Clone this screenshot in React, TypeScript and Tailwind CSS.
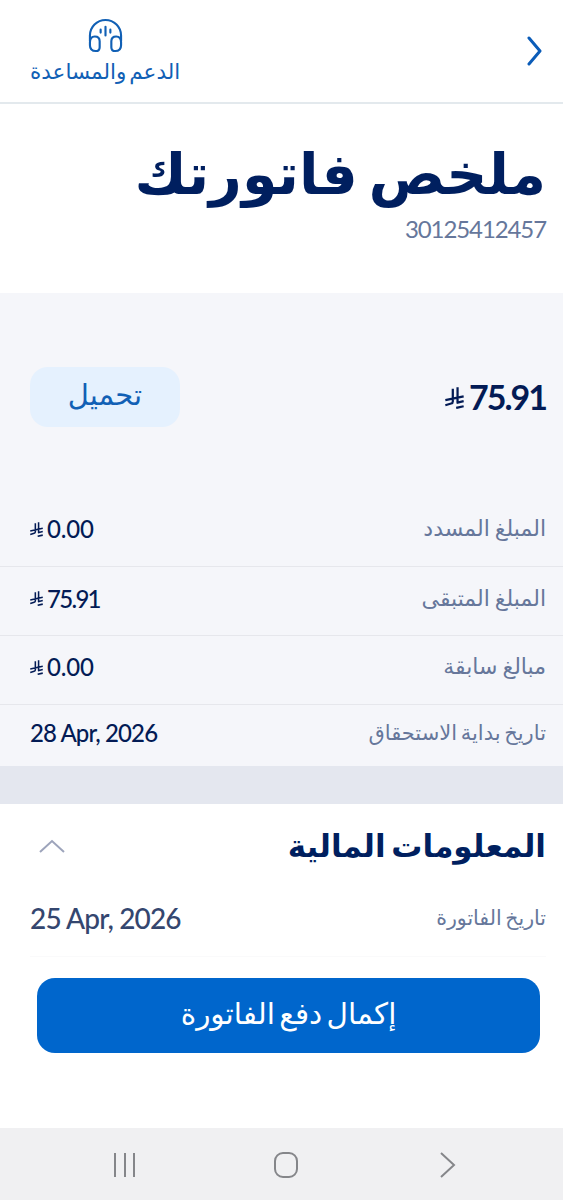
import type { ReactNode } from 'react';

function Riyal({ className }: { className: string }) {
  return (
    <svg viewBox="0 0 56 64" className={className} fill="none" stroke="currentColor" strokeWidth="6.6" preserveAspectRatio="none">
      <path d="M23 5V42Q23 47 18 48L1 53M37 1V46M1 38L55 27M34 46L55 41M33 61L55 56" />
    </svg>
  );
}

type RowProps = { label: string; value: ReactNode; className: string; labelClass?: string; valueClass?: string };

function Row({
  label,
  value,
  className,
  labelClass = 'text-[22px] [word-spacing:-2px]',
  valueClass = 'text-[24px] tracking-[-0.9px] text-[#031b55]',
}: RowProps) {
  return (
    <div className={`flex items-center justify-between pr-[17px] pl-[30px] ${className}`}>
      <span className={`leading-none text-[#66779b] ${labelClass}`}>{label}</span>
      <span dir="ltr" className={`flex items-center gap-1 font-[Lato,sans-serif] leading-none font-medium ${valueClass}`}>
        {value}
      </span>
    </div>
  );
}

function Amount({ children, className }: { children: string; className: string }) {
  return (
    <>
      <Riyal className="h-[15px] w-[13px]" />
      <span className={className}>{children}</span>
    </>
  );
}

export default function App() {
  return (
    <div dir="rtl" className="flex h-[1200px] w-[563px] flex-col overflow-hidden bg-white font-['DejaVu_Sans',sans-serif]">
      <header className="flex h-[104px] shrink-0 items-center justify-between border-b-2 border-[#e3e9ed] pr-[20px] pl-[30px]">
        <svg viewBox="0 0 16 30" className="h-[30px] w-[16px]" fill="none" stroke="#0b5cb8" strokeWidth="3" strokeLinecap="round" strokeLinejoin="round">
          <path d="M2 2L13 15L2 28" />
        </svg>
        <div className="flex flex-col items-center gap-[9px] pb-0.5 text-[#1160b5]">
          <svg viewBox="0 0 36 36" className="h-[35px] w-[35px]" fill="none" stroke="currentColor" strokeWidth="2.2" strokeLinecap="round">
            <path d="M2 24V18a16 16 0 0 1 32 0V24" />
            <path d="M2 25Q2 19 7 19Q12 19 12 24V30Q12 34 8 34Q2 34 2 28ZM34 25Q34 19 29 19Q24 19 24 24V30Q24 34 28 34Q34 34 34 28Z" />
            <path d="M13 12v3M18 9v9M23 12v3" />
          </svg>
          <span className="text-[21.5px] leading-[20px] [word-spacing:-4px]">الدعم والمساعدة</span>
        </div>
      </header>

      <section className="flex h-[189px] shrink-0 flex-col items-start pt-[34px] pr-[17px]">
        <h1 className="text-[57px] leading-[72px] font-bold text-[#001f5f] [word-spacing:-9px]">ملخص فاتورتك</h1>
        <p className="mt-[5px] font-[Lato,sans-serif] text-[24px] leading-[28px] tracking-[-1.1px] text-[#66779b]">30125412457</p>
      </section>

      <section className="shrink-0 bg-[#f5f6fa]">
        <div className="flex h-[205px] items-center justify-between pt-[3px] pr-[17px] pl-[30px]">
          <span dir="ltr" className="flex items-center gap-[5px] font-[Lato,sans-serif] text-[34px] leading-none font-bold text-[#031b55]">
            <Riyal className="mt-0.5 h-[22px] w-[19px]" />
            <span className="tracking-[-2px]">75.91</span>
          </span>
          <button className="flex h-[60px] w-[150px] items-center justify-center rounded-[18px] bg-[#e5f1fe] pb-1 text-[29px] leading-none text-[#1160b5]">تحميل</button>
        </div>
        <Row className="h-[69px] border-b border-[#e6e7ec] pb-[6px]" label="المبلغ المسدد" value={<Amount className="tracking-[-0.2px]">0.00</Amount>} />
        <Row className="h-[69px] border-b border-[#e6e7ec] pb-[5px]" label="المبلغ المتبقى" value={<Amount className="tracking-[-1.7px]">75.91</Amount>} />
        <Row className="h-[69px] border-b border-[#e6e7ec] pb-[6px]" label="مبالغ سابقة" value={<Amount className="tracking-[-0.2px]">0.00</Amount>} />
        <Row className="h-[61px] pb-[5px]" label="تاريخ بداية الاستحقاق" value="28 Apr, 2026" labelClass="text-[21px] [word-spacing:-3px]" />
      </section>
      <div className="h-[38px] shrink-0 bg-[#e4e7ef]" />

      <section className="shrink-0">
        <div className="flex h-[84px] items-center justify-between pr-[17px] pl-[39px]">
          <h2 className="text-[31px] leading-none font-bold text-[#001f5f] [word-spacing:-5px]">المعلومات المالية</h2>
          <svg viewBox="0 0 26 14" className="h-[14px] w-[26px]" fill="none" stroke="#9da4bb" strokeWidth="2">
            <path d="M1 13L13 2L25 13" />
          </svg>
        </div>
        <Row
          className="h-[68px] pb-[8px]"
          label="تاريخ الفاتورة"
          value="25 Apr, 2026"
          labelClass="text-[20.5px] [word-spacing:-3px]"
          valueClass="text-[28px] tracking-[-0.85px] text-[#34466f]"
        />
        <div className="mr-[17px] ml-[30px] h-px bg-[#fafafb]" />
      </section>

      <button className="mt-[21px] mr-[23px] flex h-[75px] w-[503px] shrink-0 items-center justify-center rounded-[18px] bg-[#0066cc] pb-0.5 text-[29.5px] leading-none text-white [word-spacing:-5px]">إكمال دفع الفاتورة</button>

      <nav dir="ltr" className="mt-auto flex h-[72px] shrink-0 items-center bg-[#f0f0f2] pt-px pl-[112px]">
        <svg viewBox="0 0 26 26" className="h-[26px] w-[26px]" stroke="#85868a" strokeWidth="2"><path d="M3 1V25M13 1V25M22 1V25" /></svg>
        <svg viewBox="0 0 26 26" className="ml-[135px] h-[26px] w-[26px]" fill="none" stroke="#85868a" strokeWidth="2"><rect x="2" y="1" width="22" height="24" rx="8" /></svg>
        <svg viewBox="0 0 16 26" className="ml-[141px] h-[26px] w-[16px]" fill="none" stroke="#85868a" strokeWidth="2"><path d="M1 1L14 13L1 25" /></svg>
      </nav>
    </div>
  );
}
